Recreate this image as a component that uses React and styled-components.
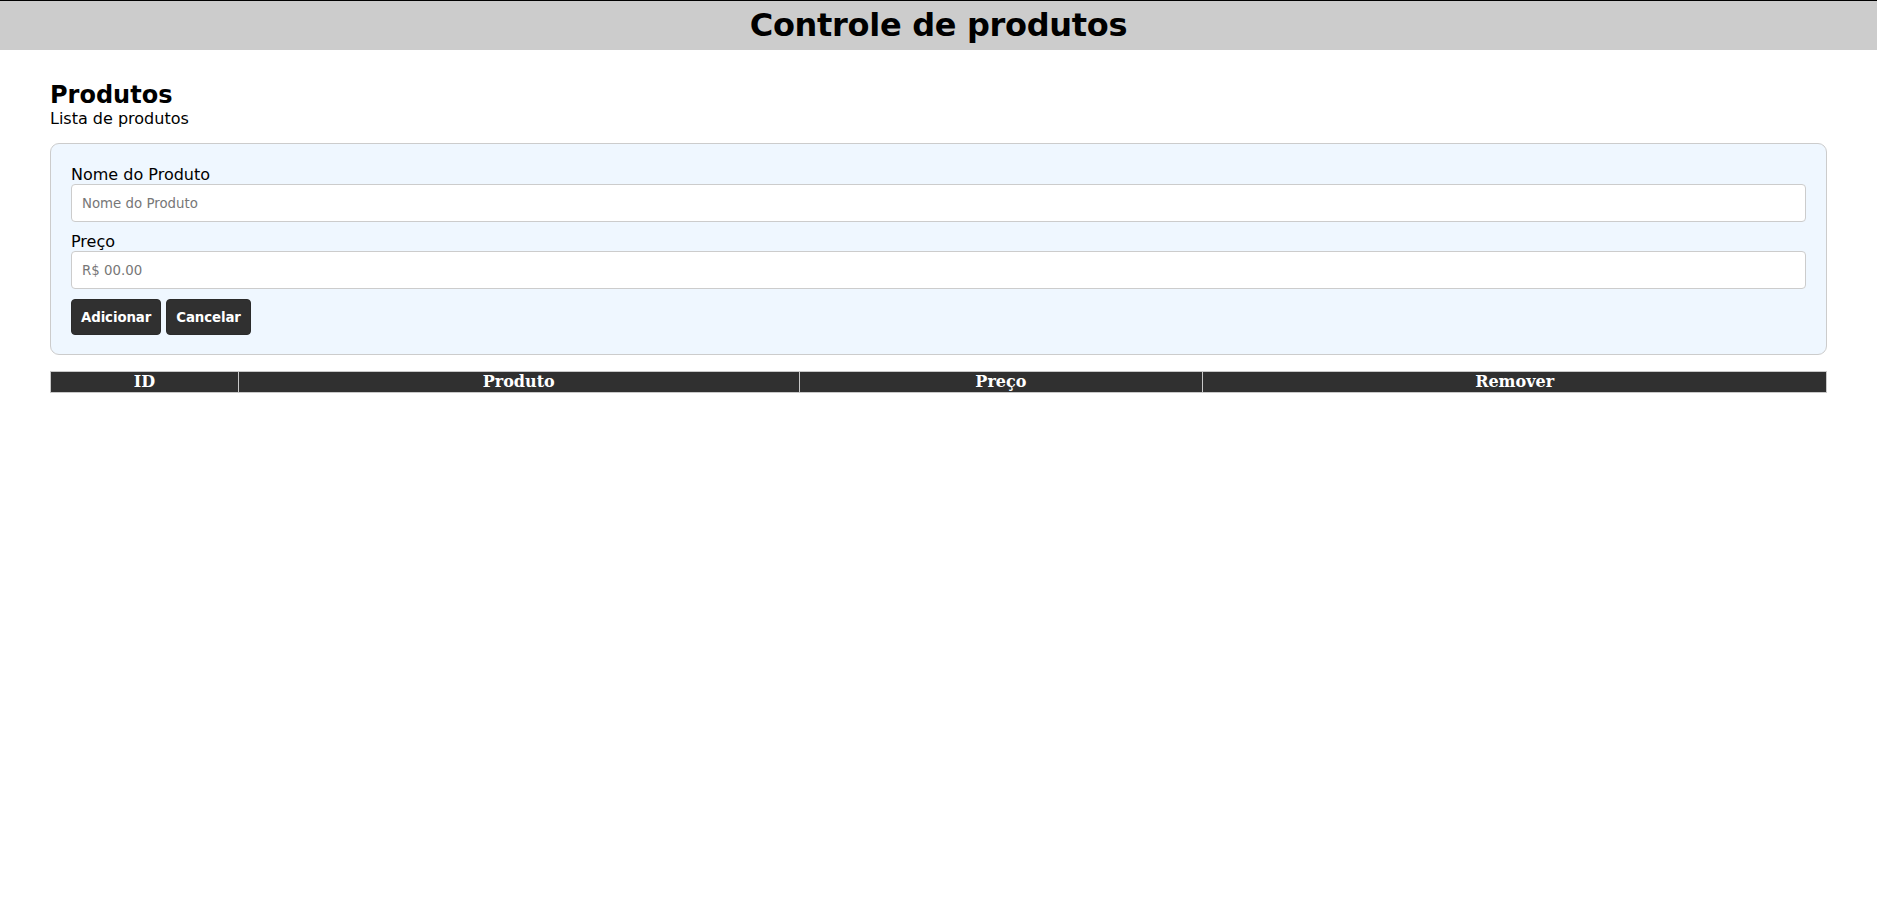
import styled, { createGlobalStyle } from 'styled-components'

const GlobalStyle = createGlobalStyle`
    body {
        margin: 0;
        background: #fff;
        font-family: "DejaVu Sans", Verdana, sans-serif;
        color: #000;
    }
`;

const TopBar = styled.header`
    border-top: 1px solid #000;
    background-color: #ccc;
    padding: 6px 0;
    text-align: center;
`;

const TopTitle = styled.h1`
    margin: 0;
    font-size: 32px;
    line-height: 37px;
    font-weight: bold;
    letter-spacing: -0.3px;
`;

const Main = styled.main`
    padding: 31px 50px 0;
`;

const SectionTitle = styled.h2`
    margin: 0;
    font-size: 24px;
    line-height: 28px;
    font-weight: bold;
`;

const SectionSubtitle = styled.p`
    margin: 0;
    font-size: 16px;
    line-height: 19px;
`;

const FormPanel = styled.form`
    margin-top: 15px;
    padding: 21px 20px 19px;
    background-color: #eff7ff;
    border: 1px solid #ccc;
    border-radius: 9px;
`;

const FieldLabel = styled.label`
    display: block;
    font-size: 16px;
    line-height: 19px;
`;

const TextInput = styled.input`
    display: block;
    box-sizing: border-box;
    width: 100%;
    height: 38px;
    margin-bottom: ${props => props.$spacing || 10}px;
    padding: 0 10px;
    border: 1px solid #ccc;
    border-radius: 4px;
    background: #fff;
    font-family: "DejaVu Sans", Verdana, sans-serif;
    font-size: 13.333px;
    color: #000;
    outline: none;

    &::placeholder {
        color: #777;
    }
`;

const ButtonRow = styled.div`
    display: flex;
    gap: 5px;
`;

const ActionButton = styled.button`
    height: 36px;
    padding: 0 9px;
    border: 1px solid #2b2b2b;
    border-radius: 4px;
    background-color: #303030;
    color: #fff;
    font-family: "DejaVu Sans", Verdana, sans-serif;
    font-size: 13.333px;
    font-weight: bold;
    letter-spacing: -0.1px;
    cursor: pointer;
`;

const ProductTable = styled.table`
    width: 100%;
    margin-top: 16px;
    border-collapse: collapse;
    table-layout: fixed;
`;

const HeaderCell = styled.th`
    box-sizing: border-box;
    width: ${props => props.$width}%;
    padding: 1px;
    border: 1px solid #c8c8c8;
    background-color: #303030;
    color: #fff;
    font-family: "DejaVu Serif", Georgia, serif;
    font-size: 16px;
    line-height: 18px;
    font-weight: bold;
    text-align: center;
`;

const columns = [
    { label: 'ID', width: 10.58 },
    { label: 'Produto', width: 31.57 },
    { label: 'Preço', width: 22.73 },
    { label: 'Remover', width: 35.12 },
]

function App() {
    return (
        <>
            <GlobalStyle/>
            <TopBar>
                <TopTitle>Controle de produtos</TopTitle>
            </TopBar>
            <Main>
                <SectionTitle>Produtos</SectionTitle>
                <SectionSubtitle>Lista de produtos</SectionSubtitle>
                <FormPanel onSubmit={e => e.preventDefault()}>
                    <FieldLabel htmlFor="nome">Nome do Produto</FieldLabel>
                    <TextInput id="nome" placeholder="Nome do Produto"/>
                    <FieldLabel htmlFor="preco">Preço</FieldLabel>
                    <TextInput id="preco" placeholder="R$ 00.00"/>
                    <ButtonRow>
                        <ActionButton type="submit">Adicionar</ActionButton>
                        <ActionButton type="button">Cancelar</ActionButton>
                    </ButtonRow>
                </FormPanel>
                <ProductTable>
                    <thead>
                        <tr>
                            {columns.map(col => (
                                <HeaderCell key={col.label} $width={col.width}>{col.label}</HeaderCell>
                            ))}
                        </tr>
                    </thead>
                    <tbody></tbody>
                </ProductTable>
            </Main>
        </>
    )
}

export default App
